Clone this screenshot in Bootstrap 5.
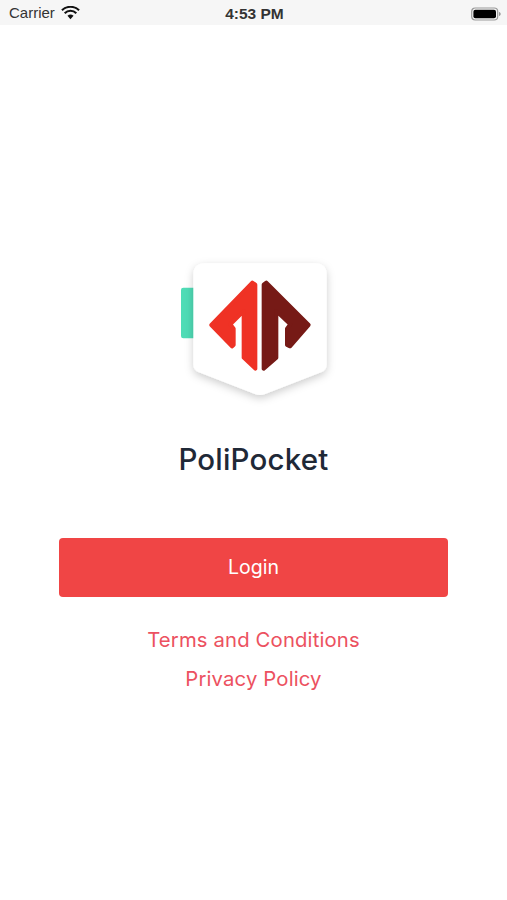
<!DOCTYPE html>
<html lang="en">
<head>
  <meta charset="UTF-8"/>
  <meta name="viewport" content="width=device-width, initial-scale=1.0"/>
  <title>PoliPocket</title>
  <link href="https://cdn.jsdelivr.net/npm/bootstrap@5.3.0/dist/css/bootstrap.min.css" rel="stylesheet"/>
  <style>
    body { background: #fff; font-family: "Inter", "Liberation Sans", sans-serif; }
    .status-strip { height: 25px; background: #f6f6f6; padding: 2px 6px 0 9px; font-family: "Liberation Sans", sans-serif; font-size: 15px; color: #333; }
    .status-time { font-weight: 700; font-size: 15.5px; color: #333; margin-left: -1px; }
    .status-side { width: 100px; }
    .wifi-icon { margin-left: 2px; margin-top: -2px; }
    .logo-art { display: block; width: 170px; height: 160px; margin: 225px auto 0 170px; }
    .app-title { font-size: 29.5px; font-weight: 500; line-height: 40px; color: #1f2937; margin: 29px 0 0 0; letter-spacing: .2px; text-align: center; }
    .login-btn { display: block; width: 389px; height: 59px; margin: 59px 0 0 59px; background: #f04545; border: 0; border-radius: 4px; color: #fff; font-size: 19.5px; line-height: 59px; padding: 0; }
    .login-btn:hover { background: #f04545; color: #fff; }
    .text-link { display: block; font-size: 20.3px; line-height: 30px; letter-spacing: .15px; color: #ec5160; text-decoration: none; text-align: center; }
    .link-stack { margin-top: 28px; gap: 9px; }
  </style>
</head>
<body>

<!-- status bar -->
<div class="status-strip d-flex align-items-center justify-content-between">
  <div class="status-side d-flex align-items-center gap-1">
    <span>Carrier</span>
    <svg class="wifi-icon" width="19" height="14" viewBox="0 0 20 14"><path d="M10 13.500 6.800 10a4.600 4.600 0 0 1 6.400 0Z" fill="#111"/><path d="M3.900 7.200a8.600 8.600 0 0 1 12.200 0M1 4.200a12.800 12.800 0 0 1 18 0" fill="none" stroke="#111" stroke-width="2.200"/></svg>
  </div>
  <span class="status-time">4:53 PM</span>
  <div class="status-side d-flex justify-content-end">
    <svg width="30" height="14" viewBox="0 0 30 14"><rect x=".7" y="1" width="26" height="12" rx="3.500" fill="none" stroke="#999" stroke-width="1.200"/><rect x="2.400" y="2.700" width="22.600" height="8.600" rx="2" fill="#000"/><path d="M28 5v4c1-.3 1.700-1 1.700-2S29 5.300 28 5Z" fill="#999"/></svg>
  </div>
</div>

<!-- logo -->
<svg class="logo-art" viewBox="0 0 510 480">
  <defs>
    <filter id="shieldShadow" x="-20%" y="-20%" width="140%" height="140%">
      <feDropShadow dx="0" dy="9" stdDeviation="13" flood-color="#000" flood-opacity=".2"/>
    </filter>
  </defs>
  <rect x="33" y="113" width="50" height="152" rx="7" fill="#4fdcb6"/>
  <path d="M105 40H435Q470 40 470 75V342Q470 360 453 367L285 432Q270 438 255 432L87 367Q70 360 70 342V75Q70 40 105 40Z" fill="#fff" filter="url(#shieldShadow)"/>
  <path d="M247 98 124 225 186 289 191 285V236L181 223 221 183V323L256 356V104Z" fill="#ef3225" stroke="#ef3225" stroke-width="12" stroke-linejoin="round"/>
  <path d="M289 98 416 225 360 289 351 285V236L361 223 319 183V323L281 356V104Z" fill="#761a16" stroke="#761a16" stroke-width="12" stroke-linejoin="round"/>
</svg>

<h1 class="app-title">PoliPocket</h1>

<button type="button" class="btn login-btn">Login</button>

<div class="link-stack d-flex flex-column">
  <a href="#" class="text-link">Terms and Conditions</a>
  <a href="#" class="text-link">Privacy Policy</a>
</div>

</body>
</html>
